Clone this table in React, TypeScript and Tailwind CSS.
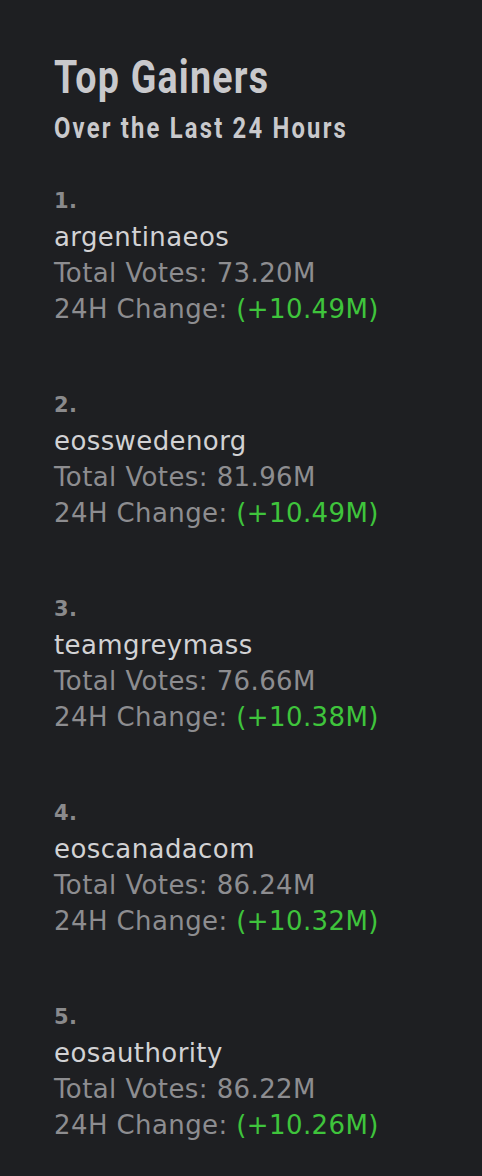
const gainers = [
  { name: "argentinaeos", total: "73.20M", change: "+10.49M" },
  { name: "eosswedenorg", total: "81.96M", change: "+10.49M" },
  { name: "teamgreymass", total: "76.66M", change: "+10.38M" },
  { name: "eoscanadacom", total: "86.24M", change: "+10.32M" },
  { name: "eosauthority", total: "86.22M", change: "+10.26M" },
]

export default function App() {
  return (
    <div className="min-h-[1176px] w-full bg-[#1e1f22] px-[54px] pt-[52px] pb-10 font-['DejaVu_Sans',sans-serif]">
      <h1 className="origin-left scale-x-[0.8] font-['Roboto',sans-serif] text-[47px] leading-[50px] font-bold tracking-[1.5px] whitespace-nowrap text-[#c9c9cc]">
        Top Gainers
      </h1>
      <h2 className="mt-[9px] origin-left scale-x-[0.82] font-['Roboto',sans-serif] text-[29px] leading-[34px] font-bold tracking-[2.7px] whitespace-nowrap text-[#c9c9cc]">
        Over the Last 24 Hours
      </h2>
      <ol className="mt-[38px] flex flex-col gap-[60px]">
        {gainers.map((g, i) => (
          <li key={g.name} className="text-[26px] leading-[36px] tracking-[0.4px]">
            <div className="font-['DejaVu_Sans',sans-serif] text-[21px] font-black text-[#8a8a8c]">{i + 1}.</div>
            <div className="text-[#d2d2d4]">{g.name}</div>
            <div className="text-[#8d8d90]">Total Votes: {g.total}</div>
            <div className="text-[#8d8d90]">
              24H Change: <span className="text-[#3fc43c]">({g.change})</span>
            </div>
          </li>
        ))}
      </ol>
    </div>
  )
}
